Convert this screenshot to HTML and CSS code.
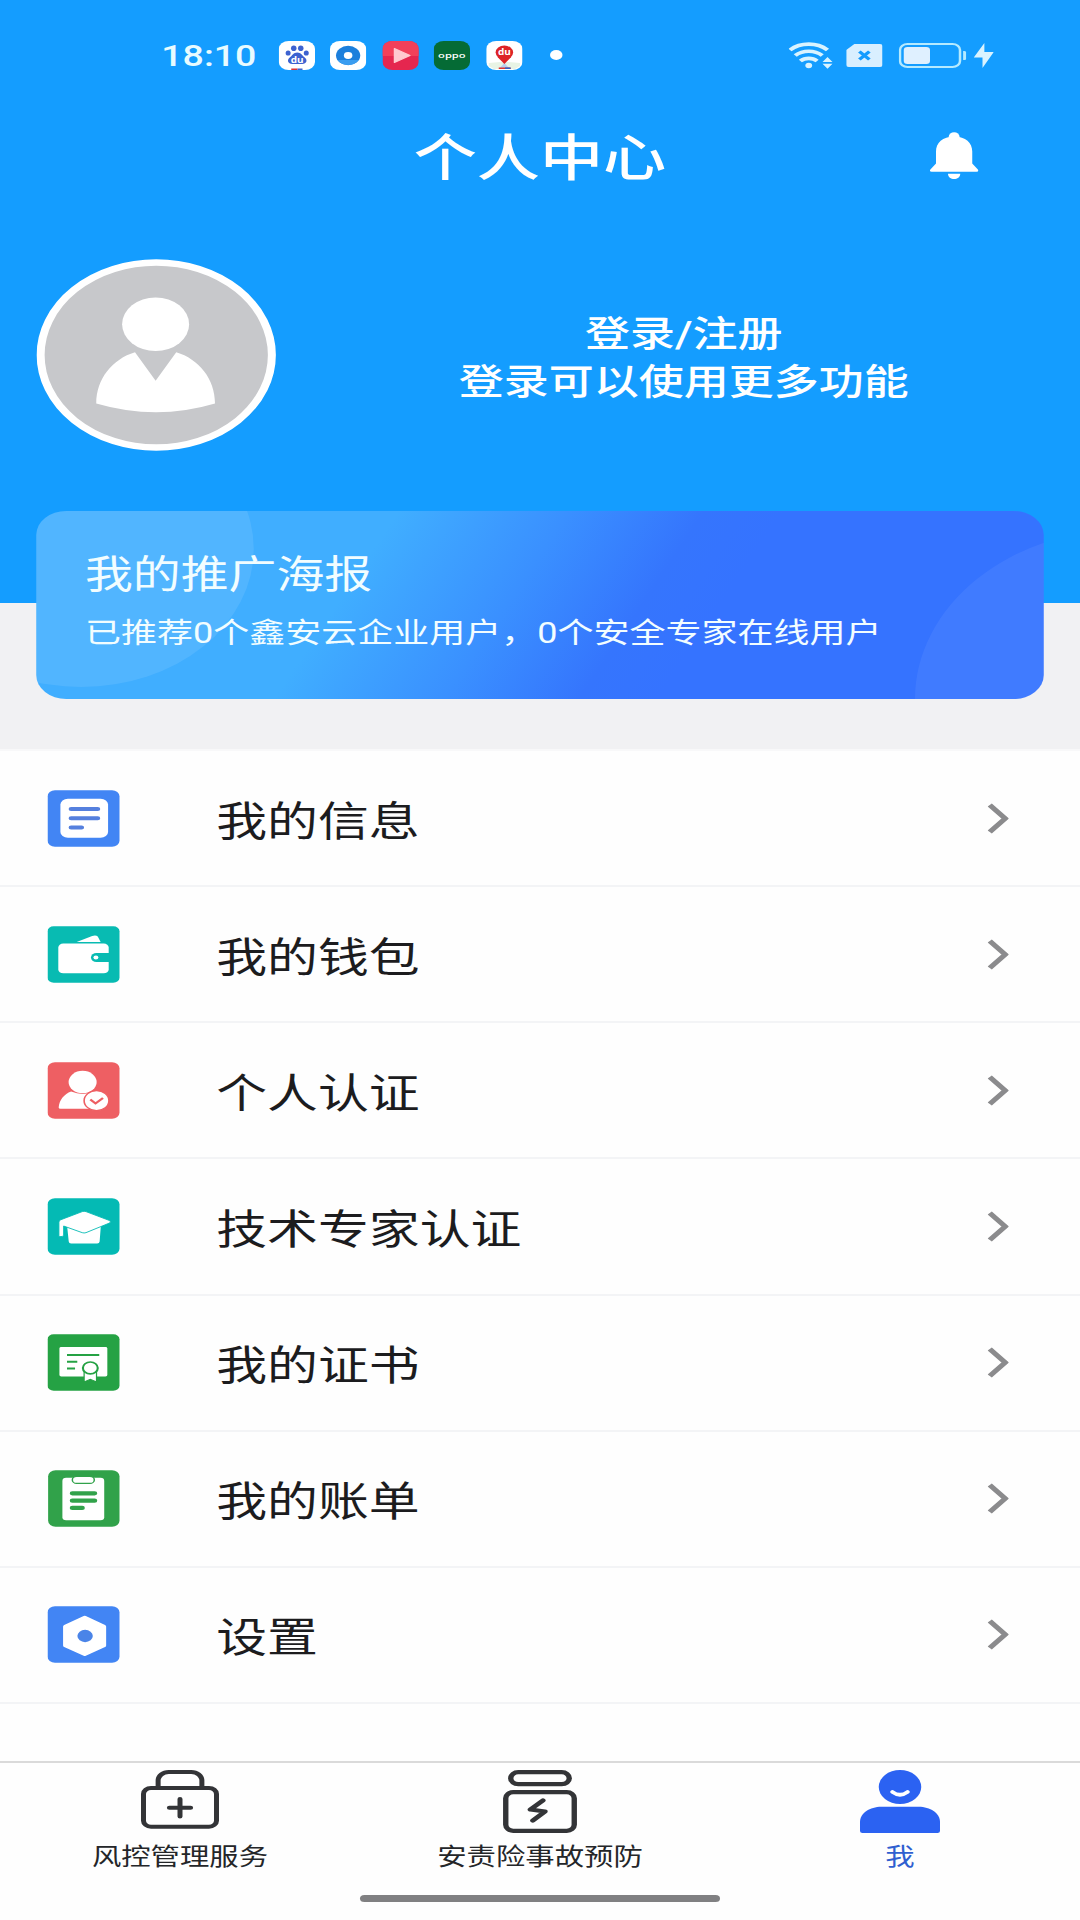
FILE: index.html
```html
<!DOCTYPE html>
<html lang="zh-CN">
<head>
    <meta charset="UTF-8">
    <meta name="viewport" content="width=device-width, initial-scale=1.0">
    <title>个人中心</title>
    <link rel="stylesheet" href="styles.css">
</head>
<body>
    <div class="screen">
        <header class="header">
            <div class="status-bar">
                <span class="time">18:10</span>
                <div class="app-icons">
                    <svg viewBox="0 0 29 29">
                        <rect width="29" height="29" rx="8" fill="#fff"/>
                        <g fill="#3d62d0">
                            <ellipse cx="7.5" cy="12" rx="2" ry="2.6"/>
                            <ellipse cx="12" cy="7.3" rx="2.2" ry="2.8"/>
                            <ellipse cx="17.6" cy="7.3" rx="2.2" ry="2.8"/>
                            <ellipse cx="22" cy="12" rx="2" ry="2.6"/>
                            <path d="M14.8 11.5c3 0 4 3 6 5 2.5 2.5 1.5 6.500-2 6.500h-8c-3.500 0-4.500-4-2-6.500 2-2 3-5 6-5z"/>
                        </g>
                        <text x="14.7" y="22" class="du">du</text>
                        <rect x="10" y="27.5" width="5" height="1.5" fill="#d33"/>
                        <rect x="15" y="27.5" width="4" height="1.5" fill="#3d62d0"/>
                    </svg>
                    <svg viewBox="0 0 29 29">
                        <rect width="29" height="29" rx="8" fill="#fff"/>
                        <circle cx="14.5" cy="14.5" r="9.7" fill="#1c7fdc"/>
                        <path d="M6 19a9.700 9.700 0 0 0 17 0z" fill="#3a9df0"/>
                        <circle cx="14.5" cy="14.5" r="3.4" fill="#fff"/>
                    </svg>
                    <svg viewBox="0 0 29 29">
                        <rect width="29" height="29" rx="8" fill="#e5264f"/>
                        <path d="M0 8a8 8 0 0 1 8-8h13a8 8 0 0 1 8 8v7H0z" fill="#f2405a"/>
                        <path d="M9.500 7.500v14l12.500-7z" fill="#ffc9cf" stroke="#ffc9cf" stroke-linejoin="round"/>
                    </svg>
                    <svg viewBox="0 0 29 29">
                        <rect width="29" height="29" rx="8" fill="#056b35"/>
                        <text x="14.5" y="17" class="oppo" textLength="22" lengthAdjust="spacingAndGlyphs">oppo</text>
                    </svg>
                    <svg viewBox="0 0 29 29">
                        <rect width="29" height="29" rx="8" fill="#fff"/>
                        <path d="M2 22l9-1h7l9 1v3l-4 3H6l-4-3z" fill="#e8f3e4"/>
                        <path d="M14.500 22l-4.500 6h9z" fill="#b8cfee"/>
                        <circle cx="14.5" cy="11.5" r="7" fill="#dd2327"/>
                        <path d="M9 16l5.500 7 5.500-7z" fill="#dd2327"/>
                        <text x="14.5" y="14" class="du">du</text>
                        <rect x="10" y="26.5" width="9.5" height="1.5" fill="#d33"/>
                        <rect x="15" y="26.5" width="4.5" height="1.5" fill="#2d62c8"/>
                    </svg>
                </div>
                <span class="dot"></span>
                <div class="status-right">
                    <svg class="wifi" viewBox="0 0 36 29">
                        <g fill="none" stroke="#d9f3ff" stroke-width="3.6">
                            <path d="M1 9a22 22 0 0 1 30 0"/>
                            <path d="M5.200 14.500a16 16 0 0 1 21.600 0"/>
                            <path d="M9.300 20a10 10 0 0 1 13.400 0"/>
                        </g>
                        <circle cx="16" cy="24.5" r="2.7" fill="#d9f3ff"/>
                        <path d="M27 21l4-5 4 5zM27 22.800l4 5 4-5z" fill="#d9f3ff"/>
                    </svg>
                    <svg class="sim" viewBox="0 0 29 23">
                        <path d="M6.500 0H27a2 2 0 0 1 2 2v19a2 2 0 0 1-2 2H2a2 2 0 0 1-2-2V6z" fill="#d9efff"/>
                        <path d="M10.500 7.500l8 8m0-8l-8 8" stroke="#149cff" stroke-width="3"/>
                    </svg>
                    <svg class="battery" viewBox="0 0 54 25">
                        <rect x="1" y="1" width="48" height="23" rx="6" fill="none" stroke="#b5eaff" stroke-width="2"/>
                        <rect x="4" y="4" width="21" height="17" rx="3" fill="#dff0ff"/>
                        <path d="M51.500 8h1a1.500 1.500 0 0 1 1.500 1.500v6a1.500 1.500 0 0 1-1.500 1.500h-1z" fill="#b5eaff"/>
                    </svg>
                    <svg class="bolt" viewBox="0 0 16 25">
                        <path d="M8.500 0L0 14.500h7L7 25 16 9H8.500z" fill="#d9f3ff"/>
                    </svg>
                </div>
            </div>

            <div class="title-bar">
                <h1>个人中心</h1>
                <svg class="bell" viewBox="0 0 39 47">
                    <circle cx="19.3" cy="4.5" r="4.3"/>
                    <path d="M19.300 4.500C10 4.500 4.800 11 4.800 19.500v12L.3 37.500q-1 2.300 1 2.300h36q2 0 1-2.300l-4.500-6v-12C33.800 11 28.600 4.500 19.300 4.500z"/>
                    <path d="M14.400 41.700h9.800c0 7-9.800 7-9.800 0z"/>
                </svg>
            </div>

            <div class="profile">
                <svg class="avatar" viewBox="0 0 192 192">
                    <circle cx="96" cy="96" r="92.5" fill="#c7c8cb" stroke="#fff" stroke-width="6.4"/>
                    <circle cx="95.5" cy="65.3" r="26.8" fill="#fff"/>
                    <path d="M48 144.500C48 120 61 100 79 93.300l16.500 28.400L112 93.300C130 100 143 120 143 144.500q-47 17.500-95 0z" fill="#fff"/>
                </svg>
                <div class="login">
                    <p>登录/注册</p>
                    <p>登录可以使用更多功能</p>
                </div>
            </div>
        </header>

        <section class="poster">
            <h2>我的推广海报</h2>
            <p>已推荐0个鑫安云企业用户，0个安全专家在线用户</p>
        </section>

        <ul class="menu">
            <li>
                <svg class="menu-icon" viewBox="0 0 58 57">
                    <rect width="58" height="57" rx="6" fill="#4285f4"/>
                    <rect x="10.4" y="8.5" width="38.4" height="39.5" rx="6" fill="#fff"/>
                    <path d="M19 19h21.500M19 28.300h21.500M19 37.500h8.500" stroke="#5580de" stroke-width="4" stroke-linecap="round"/>
                </svg>
                <span>我的信息</span>
                <svg class="arrow" viewBox="0 0 16 30"><path d="M1.500 2l12 13-12 13"/></svg>
            </li>
            <li>
                <svg class="menu-icon" viewBox="0 0 58 57">
                    <rect width="58" height="57" rx="5" fill="#08bbb2"/>
                    <path d="M23.500 15.800L36 9.800q3-1.200 4.500.5l2.300 5.500z" fill="#fff"/>
                    <rect x="8.7" y="17.5" width="40.6" height="30" rx="4" fill="#fff"/>
                    <path d="M50 27H39.500a4.500 4.500 0 0 0 0 9H50z" fill="#08bbb2"/>
                    <circle cx="39" cy="31.5" r="2" fill="#fff"/>
                </svg>
                <span>我的钱包</span>
                <svg class="arrow" viewBox="0 0 16 30"><path d="M1.500 2l12 13-12 13"/></svg>
            </li>
            <li>
                <svg class="menu-icon" viewBox="0 0 58 57">
                    <rect width="58" height="57" rx="6" fill="#ee5f63"/>
                    <circle cx="28.3" cy="20" r="11.3" fill="#fff"/>
                    <path d="M9 45.500C9.500 38 13.500 32 19 29.500q9.500 5 18.500 0L42 47H10.500Q9 47 9 45.500z" fill="#fff"/>
                    <circle cx="39.5" cy="38.7" r="10" fill="#fff" stroke="#ee5f63" stroke-width="1.3"/>
                    <path d="M34.500 37.500l4.200 4 6-5.500" fill="none" stroke="#ee5f63" stroke-width="2"/>
                </svg>
                <span>个人认证</span>
                <svg class="arrow" viewBox="0 0 16 30"><path d="M1.500 2l12 13-12 13"/></svg>
            </li>
            <li>
                <svg class="menu-icon" viewBox="0 0 58 57">
                    <rect width="58" height="57" rx="6" fill="#04bab4"/>
                    <path d="M15.800 28l27.200-.5-1 16q-.1 2-2 2H19q-1.700 0-1.900-2z" fill="#fff"/>
                    <path d="M28 13.500q1.500-.6 3 0l19 9q1.500 1.500 0 2.500L31 34.700q-1.500.6-3 0L13 28v9.500q-.5 1.500-3.800 1.200V24q0-1.500 1.500-2.300z" fill="#fff" stroke="#04bab4" stroke-width=".8"/>
                </svg>
                <span>技术专家认证</span>
                <svg class="arrow" viewBox="0 0 16 30"><path d="M1.500 2l12 13-12 13"/></svg>
            </li>
            <li>
                <svg class="menu-icon" viewBox="0 0 58 57">
                    <rect width="58" height="57" rx="5" fill="#25a244"/>
                    <rect x="9.6" y="13" width="38.6" height="29.5" rx="1.5" fill="#fff"/>
                    <path d="M15.700 21h26M15.700 27.700H24M15.700 34.500h6.500" stroke="#25a244" stroke-width="2"/>
                    <path d="M29.500 37.500h10V48l-5-2.500-5 2.500z" fill="#fff" stroke="#25a244" stroke-width="1"/>
                    <circle cx="34.5" cy="34" r="6" fill="#fff" stroke="#25a244" stroke-width="1.7"/>
                </svg>
                <span>我的证书</span>
                <svg class="arrow" viewBox="0 0 16 30"><path d="M1.500 2l12 13-12 13"/></svg>
            </li>
            <li>
                <svg class="menu-icon" viewBox="0 0 58 57">
                    <rect x=".5" width="57.5" height="57" rx="6" fill="#31a24a"/>
                    <rect x="12" y="7.7" width="33.7" height="42.6" rx="3" fill="#fff"/>
                    <rect x="20" y="6.3" width="17.7" height="7" rx="3.5" fill="#fff" stroke="#31a24a" stroke-width="1.2"/>
                    <path d="M20 23.300h18M20 30.700h18M20 38h8" stroke="#31a24a" stroke-width="4.2" stroke-linecap="round"/>
                </svg>
                <span>我的账单</span>
                <svg class="arrow" viewBox="0 0 16 30"><path d="M1.500 2l12 13-12 13"/></svg>
            </li>
            <li>
                <svg class="menu-icon" viewBox="0 0 58 57">
                    <rect width="58" height="57" rx="6" fill="#4285f4"/>
                    <path d="M30 11.500l15.500 9v19L30 48.500l-15.700-9v-19z" fill="#fff" stroke="#fff" stroke-width="3.5" stroke-linejoin="round"/>
                    <circle cx="30.3" cy="30" r="6.2" fill="#4a84e8"/>
                </svg>
                <span>设置</span>
                <svg class="arrow" viewBox="0 0 16 30"><path d="M1.500 2l12 13-12 13"/></svg>
            </li>
        </ul>

        <nav class="tab-bar">
            <a class="tab">
                <svg viewBox="0 0 64 64">
                    <g fill="none" stroke="#333437" stroke-width="4">
                        <path d="M14.500 17v-6.500a8.500 8.500 0 0 1 8.500-8.500h18a8.500 8.500 0 0 1 8.500 8.500V17"/>
                        <rect x="2.8" y="18" width="58.4" height="38.7" rx="6"/>
                        <path d="M32 29v17.500M23.500 37.700h17" stroke-linecap="round"/>
                    </g>
                </svg>
                <span>风控管理服务</span>
            </a>
            <a class="tab">
                <svg viewBox="0 0 64 64">
                    <g fill="none" stroke="#333437" stroke-width="4.3" stroke-linejoin="round" stroke-linecap="round">
                        <rect x="8.6" y="2.2" width="46.8" height="12" rx="6"/>
                        <rect x="4.6" y="22.2" width="54.8" height="38.6" rx="6"/>
                        <path d="M34.300 30.500L24.300 39.500 36 41.500 26.300 50.500"/>
                    </g>
                </svg>
                <span>安责险事故预防</span>
            </a>
            <a class="tab active">
                <svg viewBox="0 0 64 64">
                    <circle cx="32" cy="17" r="17" fill="#2b62f2"/>
                    <path d="M26 22q6 5.500 12 0" fill="none" stroke="#fff" stroke-width="3.7" stroke-linecap="round"/>
                    <path d="M0 52C0 43 8 36.700 17 36.700h30C56 36.700 64 43 64 52v9q0 2-2 2H2q-2 0-2-2z" fill="#2b62f2"/>
                </svg>
                <span>我</span>
            </a>
        </nav>
        <div class="home-area">
            <div class="home-bar"></div>
        </div>
    </div>
</body>
</html>
```
FILE: styles.css
```css
* {
    box-sizing: border-box;
    margin: 0;
    padding: 0;
}

body {
    width: 1080px;
    height: 1920px;
    overflow: hidden;
    background: #fefefe;
    font-family: Roboto, "Noto Sans CJK SC", sans-serif;
}

svg {
    display: block;
    flex: none;
}

/* 864px design stretched to the full display width */
.screen {
    width: 864px;
    height: 1920px;
    display: flex;
    flex-direction: column;
    background: #f1f1f3;
    transform: scaleX(1.25);
    transform-origin: 0 0;
}

.header {
    flex: none;
    height: 603px;
    background: #149dff;
    color: #fff;
}

/* status bar */
.status-bar {
    display: flex;
    align-items: center;
    height: 110px;
    padding: 0 69px 0 129px;
}

.time {
    width: 93.6px;
    font-size: 30px;
    font-weight: 500;
    color: #e8fbff;
}

.app-icons {
    display: flex;
    gap: 12.6px;
}

.app-icons svg {
    width: 29px;
    height: 29px;
}

.du {
    font: bold 8px "Open Sans", sans-serif;
    fill: #fff;
    text-anchor: middle;
}

.oppo {
    font: 600 7px "Open Sans", sans-serif;
    fill: #fff;
    text-anchor: middle;
}

.dot {
    width: 10px;
    height: 10px;
    margin-left: 22px;
    border-radius: 50%;
    background: #fff;
}

.status-right {
    display: flex;
    align-items: center;
    margin-left: auto;
}

.wifi {
    width: 36px;
    height: 29px;
}

.sim {
    width: 29px;
    height: 23px;
    margin-left: 10px;
}

.battery {
    width: 54px;
    height: 25px;
    margin-left: 13px;
}

.bolt {
    width: 16px;
    height: 25px;
    margin-left: 6px;
}

/* title */
.title-bar {
    display: grid;
    grid-template-columns: 1fr auto 1fr;
    height: 92px;
    padding: 0 81px;
}

.title-bar h1 {
    grid-column: 2;
    font-size: 50.5px;
    font-weight: 500;
    line-height: 97px;
}

.bell {
    justify-self: end;
    width: 39px;
    height: 47px;
    margin-top: 21.5px;
    fill: #fff;
}

.profile {
    display: flex;
    align-items: center;
    padding: 57px 29px 0;
}

.avatar {
    width: 192px;
    height: 192px;
}

.login {
    flex: 1;
    margin-left: 38px;
    padding-top: 7px;
    font-size: 36px;
    font-weight: 500;
    line-height: 48px;
    text-align: center;
}

/* poster card */
.poster {
    position: relative;
    flex: none;
    height: 188px;
    margin: -92px 29px 0;
    padding: 36px 38px 0 39px;
    border-radius: 24px;
    overflow: hidden;
    color: #f2fdff;
    background: linear-gradient(118deg, #40aeff 32%, #3a90ff 47%, #3575fd 59%, #3573ff 66%);
}

.poster::before,
.poster::after {
    content: "";
    position: absolute;
    border-radius: 50%;
}

.poster::before {
    left: -102px;
    top: -100px;
    width: 276px;
    height: 276px;
    background: rgba(255, 255, 255, 0.09);
}

.poster::after {
    left: 703px;
    top: 18px;
    width: 340px;
    height: 340px;
    background: rgba(255, 255, 255, 0.06);
}

.poster h2,
.poster p {
    position: relative;
    z-index: 1;
}

.poster h2 {
    font-size: 38.3px;
    font-weight: 400;
    line-height: 56px;
}

.poster p {
    font-size: 28.8px;
    line-height: 60px;
    white-space: nowrap;
}

/* menu list */
.menu {
    flex: 1;
    margin-top: 50px;
    border-top: 2px solid #f8f8f9;
    background: #fefefe;
    list-style: none;
}

.menu li {
    display: flex;
    align-items: center;
    height: 136.15px;
    padding: 0 57.5px 0 38.4px;
    border-bottom: 2px solid #f3f4f6;
}

.menu span {
    flex: 1;
    margin-left: 77px;
    font-size: 40.7px;
    color: #1c1c1e;
}

.menu-icon {
    width: 57.6px;
    height: 57px;
}

.arrow {
    width: 17px;
    height: 31px;
    fill: none;
    stroke: #8b8b8d;
    stroke-width: 4.4;
}

/* bottom tabs */
.tab-bar {
    flex: none;
    display: flex;
    height: 134px;
    border-top: 2px solid #dadada;
    background: #fefefe;
}

.tab {
    flex: 1;
    display: flex;
    flex-direction: column;
    align-items: center;
    padding-top: 7px;
    font-size: 23.5px;
    line-height: 40px;
    color: #242629;
}

.tab svg {
    width: 64px;
    height: 64px;
}

.tab span {
    margin-top: 3px;
}

.tab.active {
    color: #2f5fd0;
}

.home-area {
    flex: none;
    height: 25px;
    background: #fefefe;
}

.home-bar {
    width: 288px;
    height: 7px;
    margin: 0 auto;
    border-radius: 4px;
    background: #808082;
}
```
